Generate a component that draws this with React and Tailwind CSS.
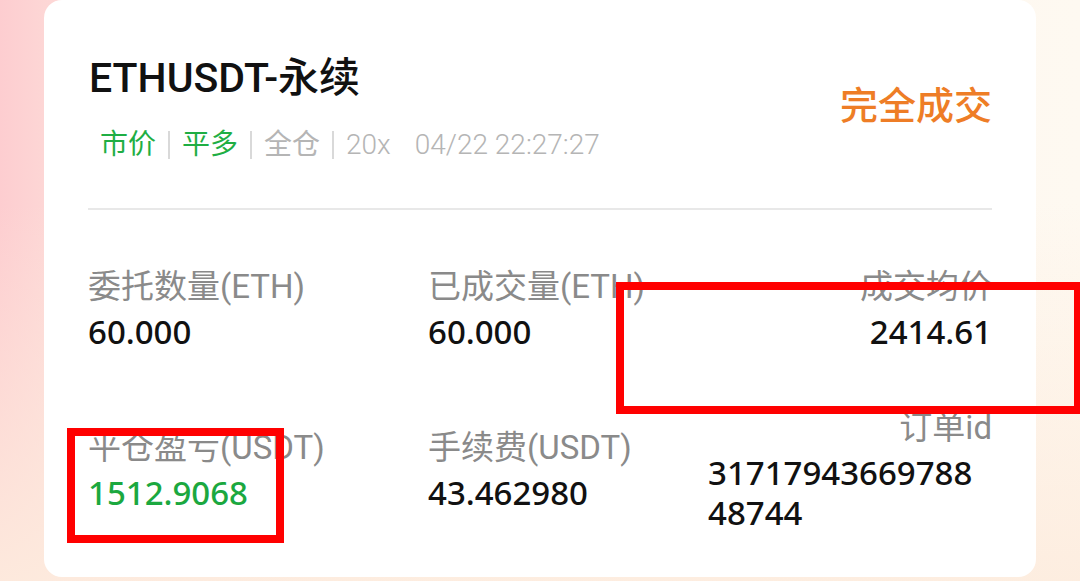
export default function App() {
  const cjk = "font-['Roboto','Noto_Sans_CJK_SC',sans-serif]";
  const num = "font-['Noto_Sans','Noto_Sans_CJK_SC',sans-serif]";
  return (
    <div className="relative w-[1080px] h-[581px] overflow-hidden bg-[linear-gradient(180deg,rgba(255,255,255,0)_35%,rgba(253,236,222,0.9)_100%),linear-gradient(90deg,#fdcdd0_0px,#fdd6d5_44px,#fef3ec_420px,#fef9f1_1080px)]">
      <div className="ml-[44px] w-[992px] h-[577px] bg-white rounded-[18px] px-[44px] pt-[54px]">
        <div className="flex items-center justify-between">
          <div>
            <div className={`${cjk} ml-[1px] text-[41px] leading-[48px] font-medium text-[#111111]`}>ETHUSDT-永续</div>
            <div className={`${cjk} mt-[23px] ml-[12px] flex items-center h-[40px] text-[28px]`}>
              <span className="text-[#1fae44]">市价</span>
              <span className="mx-[12px] w-[2px] h-[28px] bg-[#d9d9d9]"></span>
              <span className="text-[#1fae44]">平多</span>
              <span className="mx-[12px] w-[2px] h-[28px] bg-[#d9d9d9]"></span>
              <span className="text-[#b5b5b5]">全仓</span>
              <span className="mx-[12px] w-[2px] h-[28px] bg-[#d9d9d9]"></span>
              <span className="text-[#b5b5b5] font-light">20x</span>
              <span className="ml-[24px] text-[#b5b5b5] font-light">04/22 22:27:27</span>
            </div>
          </div>
          <div className={`${cjk} text-[38px] font-medium text-[#ee7d26] mb-[6px]`}>完全成交</div>
        </div>
        <div className="mt-[43px] h-[2px] bg-[#e8e8e8]"></div>
        <div className="mt-[52px] grid grid-cols-[340px_280px_1fr] gap-y-[51px] items-center">
          <div>
            <div className={`${cjk} text-[33px] leading-[50px] text-[#8a8a8a]`}>委托数量(ETH)</div>
            <div className={`${num} text-[33px] leading-[40px] font-medium text-[#111111]`}>60.000</div>
          </div>
          <div>
            <div className={`${cjk} text-[33px] leading-[50px] text-[#8a8a8a]`}>已成交量(ETH)</div>
            <div className={`${num} text-[33px] leading-[40px] font-medium text-[#111111]`}>60.000</div>
          </div>
          <div className="text-right">
            <div className={`${cjk} text-[33px] leading-[50px] text-[#8a8a8a]`}>成交均价</div>
            <div className={`${num} text-[33px] leading-[40px] font-medium text-[#111111]`}>2414.61</div>
          </div>
          <div>
            <div className={`${cjk} text-[33px] leading-[50px] text-[#8a8a8a]`}>平仓盈亏(USDT)</div>
            <div className={`${num} text-[33px] leading-[40px] font-medium text-[#1ba83f]`}>1512.9068</div>
          </div>
          <div>
            <div className={`${cjk} text-[33px] leading-[50px] text-[#8a8a8a]`}>手续费(USDT)</div>
            <div className={`${num} text-[33px] leading-[40px] font-medium text-[#111111]`}>43.462980</div>
          </div>
          <div>
            <div className={`${cjk} text-[33px] leading-[50px] text-[#8a8a8a] text-right`}>订单id</div>
            <div className={`${num} text-[33px] leading-[40px] font-medium text-[#111111]`}>
              <div>31717943669788</div>
              <div>48744</div>
            </div>
          </div>
        </div>
      </div>
      <div className="absolute left-[616px] top-[282px] w-[466px] h-[132px] border-[8px] border-[#ff0000]"></div>
      <div className="absolute left-[67px] top-[428px] w-[217px] h-[115px] border-[8px] border-[#ff0000]"></div>
    </div>
  );
}
